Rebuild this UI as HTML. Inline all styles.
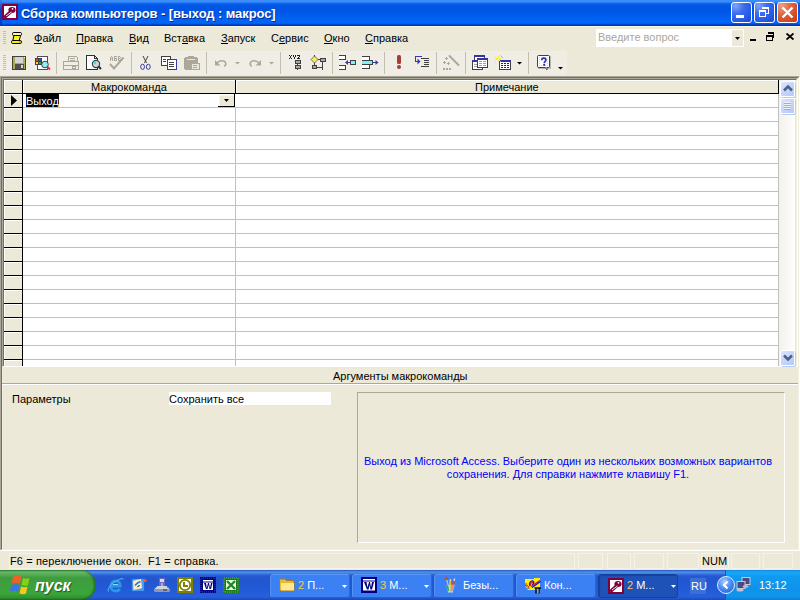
<!DOCTYPE html>
<html><head><meta charset="utf-8">
<style>
*{margin:0;padding:0;box-sizing:border-box}
html,body{width:800px;height:600px;overflow:hidden;background:#ECE9D8;font-family:"Liberation Sans",sans-serif;font-size:11px;color:#000}
.a{position:absolute}
.t{position:absolute;white-space:pre;line-height:13px}
#title{left:0;top:0;width:800px;height:26px;background:linear-gradient(#3F8EF9 0,#3A8CFA 2px,#1670F2 3px,#065CE9 4px,#0056E3 8px,#0057E6 12px,#005DEE 16px,#0064F6 20px,#0066F8 23px,#0052DC 24px,#0037B6 25px,#0037B6 26px)}
.tb{position:absolute;top:2px;width:21px;height:21px;border:1px solid #fff;border-radius:3px;background:radial-gradient(circle at 20% 15%,#7FA6F8 0,#3D6EEE 35%,#2A5DE8 65%,#1D48CF 100%)}
#menubar{left:0;top:26px;width:800px;height:24px;background:#ECE9D8}
.mi{top:32px}
u{text-decoration:none;border-bottom:1px solid #000;display:inline-block;line-height:10px}
#toolbar{left:0;top:51px;width:567px;height:24px;background:#F0EEE4;border-radius:0 2px 2px 0}
.tk{position:absolute;top:574px;width:80px;height:24px;border-radius:3px;background:#3C81F3;border:1px solid;border-color:#5A98F6 #2A66D8 #2A5ECE #5592F4;box-shadow:-1px 0 0 #2354C4}
.tkt{top:579px;color:#fff}
.sep{position:absolute;top:53px;width:1px;height:20px;background:#C5C2B2}
.grip{position:absolute;width:3px}
.sb{position:absolute;width:15px;height:16px;border-radius:2px;border:1px solid #fff;background:linear-gradient(135deg,#DCE6FD 0,#C6D5FB 50%,#B5C9F8 100%);box-shadow:1px 1px 0 #B9CAF3}
</style></head><body>
<!-- title bar -->
<div id="title" class="a"></div>
<div class="a" style="left:0;top:0;width:2px;height:26px;background:linear-gradient(#3A7FE8,#0043C8 10px,#0043C8 22px,#0036B5)"></div>
<svg class="a" style="left:2px;top:4px" width="16" height="16" viewBox="0 0 16 16">
<rect x="0" y="0" width="16" height="16" fill="#800040"/>
<rect x="2" y="2" width="12" height="12" fill="#fff"/>
<path d="M3.5 12.5L9 7.5" stroke="#800040" stroke-width="3.4" stroke-linecap="round"/>
<ellipse cx="10" cy="6" rx="3.6" ry="3" fill="#800040"/>
<path d="M4 12L9.5 8" stroke="#fff" stroke-width="0.9"/>
<circle cx="10.5" cy="4.8" r="0.9" fill="#fff"/>
</svg>
<div class="t" style="left:21px;top:6px;font-size:13px;font-weight:bold;color:#0A2A8A;line-height:16px;letter-spacing:-0.1px;transform:translate(1px,1px)">Сборка компьютеров - [выход : макрос]</div>
<div class="t" style="left:21px;top:6px;font-size:13px;font-weight:bold;color:#fff;line-height:16px;letter-spacing:-0.1px">Сборка компьютеров - [выход : макрос]</div>
<div class="tb" style="left:731px"></div>
<div class="tb" style="left:754px"></div>
<div class="tb" style="left:777px;background:radial-gradient(circle at 20% 15%,#F0A088 0,#E06C48 35%,#D64B22 70%,#C83C10 100%)"></div>
<div class="a" style="left:736px;top:15px;width:8px;height:3px;background:#fff"></div>
<svg class="a" style="left:759px;top:7px" width="11" height="10" shape-rendering="crispEdges"><rect x="3" y="0" width="7" height="2" fill="#fff"/><rect x="9" y="2" width="1" height="5" fill="#fff"/><rect x="7" y="6" width="2" height="1" fill="#fff"/><rect x="0" y="3" width="7" height="2" fill="#fff"/><rect x="0" y="5" width="1" height="5" fill="#fff"/><rect x="6" y="5" width="1" height="5" fill="#fff"/><rect x="0" y="9" width="7" height="1" fill="#fff"/></svg>
<svg class="a" style="left:781px;top:6px" width="13" height="13"><path d="M1.5 1.5L11.5 11.5M11.5 1.5L1.5 11.5" stroke="#fff" stroke-width="2.3"/></svg>

<!-- menu bar -->
<div id="menubar" class="a"></div>
<div class="a" style="left:0;top:26px;width:800px;height:1px;background:#F8F5E6"></div>
<div class="a grip" style="left:3px;top:31px;height:13px;background:repeating-linear-gradient(to bottom,#C3C0B0 0 1px,transparent 1px 2px)"></div>
<svg class="a" style="left:11px;top:32px" width="12" height="12" viewBox="0 0 12 12">
<path d="M3 3.5L9.5 3.5L8 9.5L1.5 9.5Z" fill="#F4F000" stroke="#000" stroke-width="1"/>
<path d="M4 5H8.5M3.5 7H8M3 8.5H7.5" stroke="#fff" stroke-width="0.8" stroke-dasharray="1 1"/>
<rect x="1.5" y="0.5" width="9" height="3" rx="1.2" fill="#fff" stroke="#000" stroke-width="1"/>
<path d="M2.5 2H9.5" stroke="#F4E800" stroke-width="1" stroke-dasharray="1.5 1"/>
<rect x="0.5" y="8.5" width="10" height="3" rx="1.2" fill="#F4F000" stroke="#000" stroke-width="1"/>
<rect x="8" y="9.5" width="2" height="1" fill="#808080"/>
</svg>
<div class="t mi" style="left:34px"><u>Ф</u>айл</div>
<div class="t mi" style="left:76px"><u>П</u>равка</div>
<div class="t mi" style="left:129px"><u>В</u>ид</div>
<div class="t mi" style="left:164px">Вст<u>а</u>вка</div>
<div class="t mi" style="left:221px"><u>З</u>апуск</div>
<div class="t mi" style="left:271px">С<u>е</u>рвис</div>
<div class="t mi" style="left:324px"><u>О</u>кно</div>
<div class="t mi" style="left:365px"><u>С</u>правка</div>

<!-- help box -->
<div class="a" style="left:596px;top:29px;width:148px;height:18px;background:#fff"></div>
<div class="a" style="left:732px;top:30px;width:11px;height:16px;background:#ECE9D8"></div>
<svg class="a" style="left:735px;top:37px" width="5" height="3"><path d="M0 0H5L2.5 3Z" fill="#000"/></svg>
<div class="t" style="left:598px;top:31px;color:#ACA899">Введите вопрос</div>
<div class="a" style="left:750px;top:39px;width:6px;height:2px;background:#000"></div>
<svg class="a" style="left:766px;top:32px" width="8" height="9"><rect x="2" y="0" width="6" height="2" fill="#000"/><rect x="7" y="0" width="1" height="6" fill="#000"/><rect x="0" y="3" width="7" height="2" fill="#000"/><rect x="0" y="3" width="1" height="6" fill="#000"/><rect x="6" y="3" width="1" height="6" fill="#000"/><rect x="0" y="8" width="7" height="1" fill="#000"/></svg>
<svg class="a" style="left:786px;top:33px" width="8" height="7"><path d="M0.5 0.5L7.5 6.5M7.5 0.5L0.5 6.5" stroke="#000" stroke-width="1.8"/></svg>

<!-- toolbar -->
<div id="toolbar" class="a"></div>
<svg class="a" style="left:0;top:0" width="600" height="76" viewBox="0 0 600 76">
<g shape-rendering="crispEdges">
<!-- grip -->
<rect x="3" y="55" width="3" height="1" fill="#C3C0B0"/><rect x="3" y="57" width="3" height="1" fill="#C3C0B0"/><rect x="3" y="59" width="3" height="1" fill="#C3C0B0"/><rect x="3" y="61" width="3" height="1" fill="#C3C0B0"/><rect x="3" y="63" width="3" height="1" fill="#C3C0B0"/><rect x="3" y="65" width="3" height="1" fill="#C3C0B0"/><rect x="3" y="67" width="3" height="1" fill="#C3C0B0"/><rect x="3" y="69" width="3" height="1" fill="#C3C0B0"/>
<!-- separators -->
<rect x="56" y="52" width="1" height="22" fill="#C2BFAE"/>
<rect x="131" y="52" width="1" height="22" fill="#C2BFAE"/>
<rect x="206" y="52" width="1" height="22" fill="#C2BFAE"/>
<rect x="280" y="52" width="1" height="22" fill="#C2BFAE"/>
<rect x="332" y="52" width="1" height="22" fill="#C2BFAE"/>
<rect x="384" y="52" width="1" height="22" fill="#C2BFAE"/>
<rect x="436" y="52" width="1" height="22" fill="#C2BFAE"/>
<rect x="465" y="52" width="1" height="22" fill="#C2BFAE"/>
<rect x="528" y="52" width="1" height="22" fill="#C2BFAE"/>
<!-- save -->
<rect x="12" y="56" width="14" height="14" fill="#404040"/>
<rect x="13" y="57" width="12" height="12" fill="#B2A950"/>
<rect x="15" y="57" width="8" height="6" fill="#D4D4D4"/>
<rect x="15" y="64" width="9" height="5" fill="#505050"/>
<rect x="21" y="65" width="2" height="3" fill="#D8D8D8"/>
<rect x="24" y="57" width="1" height="1" fill="#fff"/>
<!-- report preview -->
<rect x="37" y="56" width="11" height="14" fill="#505050"/>
<rect x="38" y="57" width="9" height="12" fill="#fff"/>
<rect x="35" y="58" width="7" height="7" fill="#404040"/>
<rect x="36" y="59" width="2" height="2" fill="#E04040"/><rect x="39" y="59" width="2" height="2" fill="#3050E0"/>
<rect x="36" y="62" width="2" height="2" fill="#F0E020"/><rect x="39" y="62" width="2" height="2" fill="#30A030"/>
</g>
<circle cx="45" cy="64.5" r="3.3" fill="#8FF0F8" stroke="#404040" stroke-width="1"/>
<path d="M47.5 67L50 69.5" stroke="#E03040" stroke-width="2"/>
<!-- printer disabled -->
<g fill="none" stroke="#ACA899" stroke-width="1" shape-rendering="crispEdges">
<path d="M68.5 61.5V56.5H76.5L77.5 57.5V61.5"/><path d="M70 58.5H75M70 60.5H75"/>
<rect x="63.5" y="61.5" width="15" height="8"/><path d="M64 65.5H78"/><rect x="72.5" y="66.5" width="3" height="2"/>
</g>
<!-- print preview -->
<path d="M86.5 55.5H94.5L97.5 58.5V69.5H86.5Z" fill="#fff" stroke="#303030" stroke-width="1" shape-rendering="crispEdges"/>
<path d="M94.5 55.5V58.5H97.5" fill="none" stroke="#303030" stroke-width="1" shape-rendering="crispEdges"/>
<circle cx="96" cy="64" r="3.6" fill="#C8D8E0" stroke="#404040" stroke-width="1.2"/>
<circle cx="95" cy="63" r="1.2" fill="#30E0F0"/>
<path d="M98.5 66.5L101 69" stroke="#303030" stroke-width="2.2"/>
<!-- spelling disabled -->
<g shape-rendering="crispEdges"><rect x="111" y="56" width="1" height="1" fill="#ACA899"/><rect x="110" y="57" width="1" height="1" fill="#ACA899"/><rect x="112" y="57" width="1" height="1" fill="#ACA899"/><rect x="110" y="58" width="1" height="1" fill="#ACA899"/><rect x="111" y="58" width="1" height="1" fill="#ACA899"/><rect x="112" y="58" width="1" height="1" fill="#ACA899"/><rect x="110" y="59" width="1" height="1" fill="#ACA899"/><rect x="112" y="59" width="1" height="1" fill="#ACA899"/><rect x="110" y="60" width="1" height="1" fill="#ACA899"/><rect x="112" y="60" width="1" height="1" fill="#ACA899"/><rect x="114" y="56" width="1" height="1" fill="#ACA899"/><rect x="115" y="56" width="1" height="1" fill="#ACA899"/><rect x="116" y="56" width="1" height="1" fill="#ACA899"/><rect x="114" y="57" width="1" height="1" fill="#ACA899"/><rect x="114" y="58" width="1" height="1" fill="#ACA899"/><rect x="115" y="58" width="1" height="1" fill="#ACA899"/><rect x="116" y="58" width="1" height="1" fill="#ACA899"/><rect x="114" y="59" width="1" height="1" fill="#ACA899"/><rect x="116" y="59" width="1" height="1" fill="#ACA899"/><rect x="114" y="60" width="1" height="1" fill="#ACA899"/><rect x="115" y="60" width="1" height="1" fill="#ACA899"/><rect x="116" y="60" width="1" height="1" fill="#ACA899"/><rect x="118" y="56" width="1" height="1" fill="#ACA899"/><rect x="119" y="56" width="1" height="1" fill="#ACA899"/><rect x="118" y="57" width="1" height="1" fill="#ACA899"/><rect x="120" y="57" width="1" height="1" fill="#ACA899"/><rect x="118" y="58" width="1" height="1" fill="#ACA899"/><rect x="119" y="58" width="1" height="1" fill="#ACA899"/><rect x="118" y="59" width="1" height="1" fill="#ACA899"/><rect x="120" y="59" width="1" height="1" fill="#ACA899"/><rect x="118" y="60" width="1" height="1" fill="#ACA899"/><rect x="119" y="60" width="1" height="1" fill="#ACA899"/></g>
<path d="M110 64L114 68.5L123.5 57.5" stroke="#ACA899" stroke-width="2" fill="none"/>
<!-- cut -->
<path d="M143 56L146.5 63M148 56L144.5 63" stroke="#404040" stroke-width="1"/>
<ellipse cx="142.6" cy="66.8" rx="1.9" ry="2.6" fill="none" stroke="#3838B0" stroke-width="1"/>
<ellipse cx="148.3" cy="66.8" rx="1.9" ry="2.6" fill="none" stroke="#3838B0" stroke-width="1"/>
<!-- copy -->
<g shape-rendering="crispEdges">
<rect x="161" y="56" width="10" height="10" fill="#404040"/><rect x="162" y="57" width="8" height="8" fill="#fff"/>
<rect x="163" y="59" width="3" height="1" fill="#404040"/><rect x="163" y="61" width="3" height="1" fill="#404040"/>
<rect x="167" y="59" width="10" height="11" fill="#3838A8"/><rect x="168" y="60" width="8" height="9" fill="#fff"/>
<rect x="169" y="62" width="5" height="1" fill="#404040"/><rect x="169" y="64" width="5" height="1" fill="#404040"/><rect x="169" y="66" width="5" height="1" fill="#404040"/>
<!-- paste disabled -->
<rect x="185" y="57" width="12" height="13" fill="#ACA899"/><rect x="184" y="58" width="14" height="11" fill="#ACA899"/>
<rect x="188" y="56" width="6" height="2" fill="#ACA899"/><rect x="187" y="59" width="8" height="1" fill="#E8E6DA"/>
<rect x="191" y="63" width="9" height="7" fill="#ACA899"/><rect x="192" y="64" width="7" height="5" fill="#E8E6DA"/>
<rect x="193" y="65" width="4" height="1" fill="#ACA899"/><rect x="193" y="67" width="4" height="1" fill="#ACA899"/>
</g>
<!-- undo / redo disabled -->
<path d="M216.5 63.5C219 60 224 60 225.5 62.5C226.5 64.5 225 66 224 66" stroke="#ACA899" stroke-width="1.6" fill="none"/>
<path d="M215 60V65.5H220.5Z" fill="#ACA899"/>
<path d="M235 62H240L237.5 64.5Z" fill="#ACA899"/>
<path d="M259.5 63.5C257 60 252 60 250.5 62.5C249.5 64.5 251 66 252 66" stroke="#ACA899" stroke-width="1.6" fill="none"/>
<path d="M261 60V65.5H255.5Z" fill="#ACA899"/>
<path d="M269 62H274L271.5 64.5Z" fill="#ACA899"/>
<!-- macro names -->
<g shape-rendering="crispEdges" fill="#202020"><rect x="289" y="55" width="1" height="1"/><rect x="291" y="55" width="1" height="1"/><rect x="290" y="56" width="1" height="1"/><rect x="290" y="57" width="1" height="1"/><rect x="289" y="58" width="1" height="1"/><rect x="291" y="58" width="1" height="1"/><rect x="293" y="55" width="1" height="1"/><rect x="295" y="55" width="1" height="1"/><rect x="293" y="56" width="1" height="1"/><rect x="295" y="56" width="1" height="1"/><rect x="294" y="57" width="1" height="1"/><rect x="294" y="58" width="1" height="1"/><rect x="297" y="55" width="1" height="1"/><rect x="298" y="55" width="1" height="1"/><rect x="299" y="55" width="1" height="1"/><rect x="299" y="56" width="1" height="1"/><rect x="298" y="57" width="1" height="1"/><rect x="297" y="58" width="1" height="1"/><rect x="298" y="58" width="1" height="1"/><rect x="299" y="58" width="1" height="1"/></g>
<g shape-rendering="crispEdges">
<rect x="295" y="60" width="6" height="4" fill="#404040"/><rect x="296" y="61" width="4" height="2" fill="#A8A8A8"/>
<rect x="297" y="64" width="1" height="1" fill="#404040"/>
<rect x="295" y="65" width="6" height="4" fill="#404040"/><rect x="296" y="66" width="4" height="2" fill="#A8A8A8"/>
<rect x="297" y="69" width="1" height="1" fill="#404040"/>
<!-- conditions -->
<rect x="314" y="55" width="1" height="10" fill="#404040"/>
<rect x="316" y="59" width="4" height="1" fill="#404040"/>
<rect x="320" y="58" width="6" height="4" fill="#404040"/><rect x="321" y="59" width="4" height="2" fill="#A8A8A8"/>
<rect x="322" y="62" width="1" height="8" fill="#404040"/>
<rect x="312" y="65" width="5" height="4" fill="#404040"/><rect x="313" y="66" width="3" height="2" fill="#A8A8A8"/>
<rect x="317" y="67" width="5" height="1" fill="#404040"/>
</g>
<path d="M314.5 56L318 59.5L314.5 63L311 59.5Z" fill="#FFF040" stroke="#505070" stroke-width="0.8"/>
<!-- insert rows -->
<g shape-rendering="crispEdges">
<rect x="339" y="55" width="7" height="5" fill="#404040"/><rect x="339" y="56" width="6" height="3" fill="#fff"/>
<rect x="339" y="65" width="7" height="5" fill="#404040"/><rect x="339" y="66" width="6" height="3" fill="#fff"/>
<rect x="350" y="60" width="6" height="5" fill="#404040"/><rect x="351" y="61" width="4" height="3" fill="#7FF0F8"/>
<rect x="347" y="62" width="3" height="1" fill="#3838A8"/>
</g>
<path d="M345 62.5L348 60V65Z" fill="#3838A8"/>
<!-- delete rows -->
<g shape-rendering="crispEdges">
<rect x="362" y="56" width="8" height="13" fill="#404040"/><rect x="362" y="57" width="7" height="11" fill="#fff"/>
<rect x="362" y="60" width="11" height="5" fill="#404040"/><rect x="362" y="61" width="10" height="3" fill="#7FF0F8"/>
<rect x="373" y="62" width="3" height="1" fill="#3838A8"/>
</g>
<path d="M378.5 62.5L375.5 60V65Z" fill="#3838A8"/>
<!-- run -->
<rect x="397" y="55" width="4" height="9" rx="1.5" fill="#A63C3C"/>
<circle cx="399" cy="67" r="2" fill="#A63C3C"/>
<!-- single step -->
<path d="M422 56.5H415V61.5H419" stroke="#3838B8" stroke-width="1" fill="none" shape-rendering="crispEdges"/>
<path d="M421 59L418 59V64Z" fill="none"/>
<path d="M420.5 61.5L417.5 58.5V64.5Z" fill="#3838B8"/>
<g fill="#404040" shape-rendering="crispEdges">
<rect x="421" y="58" width="8" height="1"/><rect x="424" y="60" width="5" height="1"/><rect x="424" y="62" width="5" height="1"/><rect x="424" y="64" width="5" height="1"/><rect x="421" y="66" width="8" height="1"/>
</g>
<!-- builder disabled -->
<path d="M449.5 56L458.5 65" stroke="#ACA899" stroke-width="2" stroke-linecap="round"/>
<g fill="#ACA899" shape-rendering="crispEdges">
<rect x="446" y="57" width="1" height="3"/><rect x="445" y="58" width="3" height="1"/>
<rect x="444" y="61" width="1" height="3"/><rect x="443" y="62" width="3" height="1"/>
<rect x="448" y="62" width="1" height="3"/><rect x="447" y="63" width="3" height="1"/>
<rect x="443" y="68" width="2" height="2"/><rect x="446" y="68" width="2" height="2"/><rect x="449" y="68" width="2" height="2"/>
</g>
<!-- database window -->
<g shape-rendering="crispEdges">
<rect x="474" y="55" width="11" height="8" fill="#404040"/><rect x="475" y="57" width="9" height="5" fill="#fff"/><rect x="474" y="55" width="11" height="2" fill="#3434A4"/>
<rect x="472" y="60" width="11" height="10" fill="#404040"/><rect x="473" y="62" width="9" height="7" fill="#fff"/><rect x="472" y="60" width="11" height="2" fill="#3434A4"/>
<rect x="474" y="64" width="3" height="1" fill="#A0A0A0"/><rect x="474" y="66" width="3" height="1" fill="#A0A0A0"/>
<rect x="477" y="58" width="11" height="10" fill="#404040"/><rect x="478" y="60" width="9" height="7" fill="#fff"/><rect x="477" y="58" width="11" height="2" fill="#3434A4"/>
<rect x="479" y="61" width="3" height="1" fill="#A0A0A0"/><rect x="483" y="61" width="3" height="1" fill="#A0A0A0"/>
<rect x="479" y="63" width="3" height="1" fill="#A0A0A0"/><rect x="483" y="63" width="3" height="1" fill="#A0A0A0"/>
<rect x="479" y="65" width="3" height="1" fill="#A0A0A0"/><rect x="483" y="65" width="3" height="1" fill="#A0A0A0"/>
<!-- new object -->
<rect x="499" y="60" width="12" height="10" fill="#404040"/><rect x="500" y="62" width="10" height="7" fill="#fff"/><rect x="499" y="60" width="12" height="2" fill="#3434A4"/>
<rect x="501" y="63" width="2" height="1" fill="#303030"/><rect x="504" y="63" width="2" height="1" fill="#303030"/><rect x="507" y="63" width="2" height="1" fill="#303030"/>
<rect x="501" y="65" width="2" height="1" fill="#303030"/><rect x="504" y="65" width="2" height="1" fill="#303030"/><rect x="507" y="65" width="2" height="1" fill="#303030"/>
<rect x="501" y="67" width="2" height="1" fill="#303030"/><rect x="504" y="67" width="2" height="1" fill="#303030"/><rect x="507" y="67" width="2" height="1" fill="#303030"/>
<rect x="498" y="56" width="1" height="6" fill="#F4EC30"/><rect x="496" y="58" width="5" height="2" fill="#F4EC30"/><rect x="497" y="57" width="3" height="4" fill="#F8F070"/>
<rect x="495" y="57" width="1" height="1" fill="#F0E840"/><rect x="501" y="56" width="1" height="1" fill="#B0B0B0"/><rect x="502" y="57" width="1" height="1" fill="#B0B0B0"/><rect x="500" y="55" width="1" height="1" fill="#C8C8C8"/>
<rect x="495" y="62" width="1" height="1" fill="#F0E840"/><rect x="494" y="59" width="1" height="1" fill="#F0E840"/><rect x="500" y="61" width="1" height="1" fill="#B0B0B0"/>
</g>
<path d="M517 62H522L519.5 64.5Z" fill="#000"/>
<!-- help -->
<rect x="538" y="56" width="13" height="13" fill="#808080" opacity="0.5"/>
<rect x="537.5" y="55.5" width="12" height="12" fill="#fff" stroke="#404040" stroke-width="1" rx="1"/>
<path d="M545 67.5L547 70V67.5" fill="#fff" stroke="#404040" stroke-width="0.8"/>
<g fill="#F0E840"><rect x="539" y="57" width="1" height="1"/><rect x="541" y="57" width="1" height="1"/><rect x="543" y="57" width="1" height="1"/><rect x="545" y="57" width="1" height="1"/><rect x="547" y="57" width="1" height="1"/><rect x="539" y="59" width="1" height="1"/><rect x="547" y="59" width="1" height="1"/><rect x="539" y="61" width="1" height="1"/><rect x="547" y="61" width="1" height="1"/><rect x="539" y="63" width="1" height="1"/><rect x="547" y="63" width="1" height="1"/><rect x="539" y="65" width="1" height="1"/><rect x="541" y="65" width="1" height="1"/><rect x="545" y="65" width="1" height="1"/><rect x="547" y="65" width="1" height="1"/></g>
<path d="M541.8 60.3C541.8 58.8 542.7 58.2 543.8 58.2C545 58.2 545.9 58.9 545.9 60C545.9 61.3 544.2 61.7 544.2 63.2" stroke="#3030A8" stroke-width="1.7" fill="none"/><rect x="543.2" y="64" width="2" height="1.8" fill="#3030A8"/>
<path d="M558 67H563L560.5 69.5Z" fill="#000"/>
</svg>

<!-- MDI window -->
<div class="a" style="left:0;top:76px;width:800px;height:475px;border:1px solid;border-color:#ACA899 #fff #fff #ACA899"></div>
<div class="a" style="left:1px;top:77px;width:798px;height:473px;border:1px solid;border-color:#716F64 #F1EFE2 #F1EFE2 #716F64"></div>
<div class="a" style="left:2px;top:78px;width:796px;height:289px;border:1px solid;border-color:#ACA899 #fff #fff #ACA899"></div>
<div class="a" style="left:3px;top:79px;width:794px;height:287px;border:1px solid;border-color:#716F64 #F1EFE2 #F1EFE2 #716F64;border-bottom:0"></div>
<!-- data area -->
<div class="a" style="left:4px;top:80px;width:791px;height:286px;background:#fff"></div>
<div class="a" style="left:23px;top:94px;width:756px;height:272px;background:repeating-linear-gradient(to bottom,#fff 0 13px,#C0C0C0 13px 14px)"></div>
<div class="a" style="left:235px;top:94px;width:1px;height:272px;background:#C0C0C0"></div>
<div class="a" style="left:778px;top:94px;width:1px;height:272px;background:#C0C0C0"></div>
<!-- row selectors -->
<div class="a" style="left:4px;top:94px;width:18px;height:272px;background:repeating-linear-gradient(to bottom,#fff 0 1px,#ECE9D8 1px 13px,#000 13px 14px)"></div>
<div class="a" style="left:4px;top:94px;width:1px;height:272px;background:repeating-linear-gradient(to bottom,#fff 0 13px,#000 13px 14px)"></div>
<!-- header -->
<div class="a" style="left:4px;top:80px;width:774px;height:13px;background:#ECE9D8;border-top:1px solid #fff;border-left:1px solid #fff"></div>
<div class="a" style="left:23px;top:81px;width:1px;height:12px;background:#fff"></div>
<div class="a" style="left:236px;top:81px;width:1px;height:12px;background:#fff"></div>
<div class="a" style="left:4px;top:93px;width:775px;height:1px;background:#000"></div>
<div class="a" style="left:235px;top:80px;width:1px;height:13px;background:#000"></div>
<div class="a" style="left:778px;top:80px;width:1px;height:14px;background:#000"></div>
<div class="a" style="left:22px;top:80px;width:1px;height:286px;background:#000"></div>
<div class="t" style="left:91px;top:81px">Макрокоманда</div>
<div class="t" style="left:475px;top:81px">Примечание</div>
<!-- current row -->
<svg class="a" style="left:11px;top:95px" width="6" height="11"><path d="M0 0L6 5.5L0 11Z" fill="#000"/></svg>
<div class="a" style="left:26px;top:94px;width:33px;height:13px;background:#000"></div>
<div class="t" style="left:26px;top:95px;color:#fff">Выход</div>
<div class="a" style="left:235px;top:94px;width:1px;height:13px;background:#fff"></div>
<div class="a" style="left:219px;top:95px;width:15px;height:11px;background:#ECE9D8;border-top:1px solid #F5F4EE;border-left:1px solid #F5F4EE"></div>
<div class="a" style="left:234px;top:94px;width:1px;height:13px;background:#000"></div>
<div class="a" style="left:218px;top:106px;width:17px;height:1px;background:#000"></div>
<svg class="a" style="left:224px;top:99px" width="5" height="3"><path d="M0 0H5L2.5 3Z" fill="#000"/></svg>
<!-- scrollbar -->
<div class="a" style="left:779px;top:80px;width:16px;height:286px;background:linear-gradient(to right,#F3F1EC,#FEFEFB)"></div>
<div class="sb" style="left:780px;top:81px;"></div>
<div class="sb" style="left:780px;top:98px;"></div>
<div class="sb" style="left:780px;top:350px;"></div>
<svg class="a" style="left:783px;top:84px" width="10" height="8"><path d="M1 6.5L5 2.5L9 6.5" stroke="#4D6185" stroke-width="2.6" fill="none"/></svg>
<svg class="a" style="left:783px;top:354px" width="10" height="8"><path d="M1 1.5L5 5.5L9 1.5" stroke="#4D6185" stroke-width="2.6" fill="none"/></svg>
<div class="a" style="left:784px;top:102px;width:7px;height:8px;background:repeating-linear-gradient(to bottom,#EEF4FE 0 1px,#8CB0F8 1px 2px)"></div>

<!-- lower panel -->
<div class="a" style="left:2px;top:367px;width:796px;height:182px;background:#ECE9D8;border-left:1px solid #F1EFE2"></div>
<div class="t" style="left:333px;top:370px">Аргументы макрокоманды</div>
<div class="a" style="left:2px;top:383px;width:796px;height:1px;background:#ACA899"></div>
<div class="a" style="left:2px;top:384px;width:796px;height:1px;background:#fff"></div>
<div class="t" style="left:12px;top:393px">Параметры</div>
<div class="a" style="left:169px;top:392px;width:162px;height:13px;background:#fff"></div>
<div class="t" style="left:169px;top:393px">Сохранить все</div>
<div class="a" style="left:357px;top:392px;width:428px;height:151px;border:1px solid;border-color:#ACA899 #fff #fff #ACA899"></div>
<div class="t" style="left:354px;top:455px;width:428px;text-align:center;color:#00f">Выход из Microsoft Access. Выберите один из нескольких возможных вариантов
сохранения. Для справки нажмите клавишу F1.</div>

<!-- status bar -->
<div class="a" style="left:0;top:550px;width:800px;height:20px;background:#ECE9D8;border-top:1px solid #fff"></div>
<div class="a" style="left:9px;top:553px;width:566px;height:16px;border:1px solid #F4F2E9"></div><div class="a" style="left:578px;top:553px;width:25px;height:16px;border:1px solid #F4F2E9"></div><div class="a" style="left:607px;top:553px;width:24px;height:16px;border:1px solid #F4F2E9"></div><div class="a" style="left:634px;top:553px;width:30px;height:16px;border:1px solid #F4F2E9"></div><div class="a" style="left:667px;top:553px;width:32px;height:16px;border:1px solid #F4F2E9"></div><div class="a" style="left:701px;top:553px;width:28px;height:16px;border:1px solid #F4F2E9"></div><div class="a" style="left:731px;top:553px;width:29px;height:16px;border:1px solid #F4F2E9"></div><div class="a" style="left:763px;top:553px;width:30px;height:16px;border:1px solid #F4F2E9"></div>
<div class="t" style="left:10px;top:555px;letter-spacing:0.13px">F6 = переключение окон.  F1 = справка.</div>
<div class="t" style="left:702px;top:555px">NUM</div>

<!-- taskbar -->
<div class="a" style="left:0;top:570px;width:800px;height:30px;background:linear-gradient(#2451B8 0,#3A73DF 1px,#4A8CE9 2px,#4A8CE9 3px,#3470DC 4px,#2459D2 6px,#2156CF 10px,#235AD6 20px,#2660DC 26px,#2358D0 28px,#1D48B0 30px)"></div>
<!-- start -->
<div class="a" style="left:0;top:570px;width:96px;height:30px;border-radius:0 14px 14px 0/0 15px 15px 0;background:linear-gradient(#2E872E 0,#6BB66B 2px,#5AAE5A 4px,#3E9B3E 8px,#3DA13D 16px,#3AA53A 24px,#2F8F2F 28px,#256F25 30px);box-shadow:inset -2px 0 2px rgba(0,60,0,0.45)"></div>
<svg class="a" style="left:9px;top:575px" width="22" height="20" viewBox="0 0 22 20">
<path d="M4 2C6 0.5 9 0.5 12.5 1.5L11 8.5C8 7.5 5 7.5 2.5 9Z" fill="#F0602A"/>
<path d="M14 3C16.5 4 18.5 4 20.5 3L19 10C17 11 15 11 12.5 10Z" fill="#88D018"/>
<path d="M2 10.5C4.5 9 7.5 9 10.5 10L9 16.5C6.5 15.5 3.5 15.5 1 17Z" fill="#4070F0"/>
<path d="M12 11.5C14.5 12.5 16.5 12.5 18.5 11.5L17 18.5C15 19.5 13 19.5 10.5 18.5Z" fill="#F8C818"/>
</svg>
<div class="t" style="left:35px;top:577px;font-size:16px;line-height:18px;font-weight:bold;font-style:italic;color:#fff;text-shadow:1px 1px 1px #1E5A1E">пуск</div>
<!-- quick launch -->
<svg class="a" style="left:107px;top:577px" width="17" height="16" viewBox="0 0 17 16">
<path d="M4.2 9H13.2C13.4 5.8 11.4 4 8.7 4C5.9 4 3.8 6.1 3.8 9.2C3.8 12.2 6 14 8.8 14C10.8 14 12.2 13.2 13 12" fill="none" stroke="#2A98E8" stroke-width="2.8"/>
<path d="M6 7.5H11" stroke="#BFE4FF" stroke-width="0.8"/>
<path d="M1.5 14.5C-0.5 12.5 5 6 10 3.5C14 1.5 16.5 1 16 2.5" fill="none" stroke="#5FB8F5" stroke-width="1"/>
</svg>
<svg class="a" style="left:131px;top:577px" width="16" height="15" viewBox="0 0 16 15">
<rect x="0" y="1" width="14" height="14" rx="1.5" fill="#1E64D8"/>
<rect x="1" y="2" width="12" height="12" rx="1" fill="#4A9AF0"/>
<path d="M2 4C5 2.5 8 3 10 2L11 11C8 12.5 5 12 2.5 13Z" fill="#F8F0C8"/>
<path d="M4 8.5C6 6 8 5 9.5 4.5" stroke="#3A70D0" stroke-width="1.5" fill="none"/>
<path d="M5.5 10.5L8 8L9 9Z" fill="#101010"/>
<circle cx="14" cy="3.5" r="1.6" fill="#F06020"/>
</svg>
<svg class="a" style="left:154px;top:577px" width="16" height="16" viewBox="0 0 16 16">
<rect x="5" y="1" width="6" height="10" fill="#6A6AC0"/>
<rect x="6" y="2" width="4" height="3" fill="#D8D8F0"/>
<rect x="7" y="6" width="2" height="4" fill="#A8A8E0"/>
<path d="M0.5 12L3.5 9H12.5L15.5 12V14.5H0.5Z" fill="#D0D4E0"/>
<rect x="0.5" y="12" width="15" height="2.5" fill="#9098B0"/>
<rect x="9" y="12.5" width="4" height="1" fill="#303040"/>
<rect x="13" y="10" width="1.5" height="1" fill="#40C040"/>
</svg>
<svg class="a" style="left:177px;top:577px" width="16" height="16" viewBox="0 0 16 16" shape-rendering="crispEdges">
<rect x="0" y="0" width="16" height="16" fill="#808000"/>
<rect x="2" y="2" width="12" height="12" fill="#fff"/>
<circle cx="8" cy="8" r="5.2" fill="#fff" stroke="#808000" stroke-width="1.8" shape-rendering="auto"/>
<rect x="6" y="5" width="2" height="5" fill="#808000"/>
<rect x="6" y="8" width="5" height="2" fill="#808000"/>
</svg>
<svg class="a" style="left:200px;top:577px" width="16" height="16" viewBox="0 0 16 16">
<rect x="0" y="0" width="16" height="16" fill="#000080"/>
<rect x="1" y="1" width="14" height="14" fill="none" stroke="#3040C0" stroke-width="1" stroke-dasharray="1 1"/>
<rect x="3" y="3" width="10" height="1.5" fill="#fff"/>
<path d="M3 5.5H13V13H3Z" fill="#fff"/>
<path d="M4 6H6L6.8 11L8 6H9L10 11L11 6H12.5L11 12H9.5L8.5 8L7.5 12H6Z" fill="#000080"/>
</svg>
<svg class="a" style="left:223px;top:577px" width="16" height="16" viewBox="0 0 16 16">
<rect x="0" y="0" width="16" height="16" fill="#1F7A1F"/>
<rect x="1" y="1" width="14" height="14" fill="none" stroke="#60B060" stroke-width="1" stroke-dasharray="1 1"/>
<rect x="3" y="3" width="10" height="10" fill="#E8F4E8"/>
<path d="M4 4L12 12M12 4L4 12" stroke="#1F8A1F" stroke-width="2.4"/>
</svg>
<!-- task buttons -->
<div class="tk" style="left:270px"></div>
<div class="tk" style="left:352px"></div>
<div class="tk" style="left:434px"></div>
<div class="tk" style="left:516px"></div>
<div class="tk" style="left:598px;background:#1E52B7;box-shadow:inset 1px 1px 1px #17429A;border-color:#17419A"></div>
<!-- btn1 -->
<svg class="a" style="left:279px;top:578px" width="16" height="14" viewBox="0 0 16 14">
<path d="M0.5 2.5C0.5 1.5 1 1 2 1H6L7.5 2.5H13.5C14.5 2.5 15 3 15 4V12.5H0.5Z" fill="#E8B838" stroke="#B07810" stroke-width="1"/>
<path d="M2 5H15V12.5H2Z" fill="#FFE890"/>
</svg>
<div class="t tkt" style="left:298px"><span style="color:#F8C850">2</span> П...</div>
<svg class="a" style="left:342px;top:585px" width="5" height="3"><path d="M0 0H5L2.5 3Z" fill="#fff"/></svg>
<!-- btn2 -->
<svg class="a" style="left:361px;top:577px" width="16" height="16" viewBox="0 0 16 16">
<rect x="0" y="0" width="16" height="16" fill="#000080"/>
<rect x="2" y="2" width="12" height="1.5" fill="#fff"/>
<path d="M2 4.5H14V13.5H2Z" fill="#fff"/>
<path d="M3 5H5.5L6.5 10.5L8 5H9L10 10.5L11 5H13L11 12.5H9.5L8.5 8L7.5 12.5H6Z" fill="#000080"/>
</svg>
<div class="t tkt" style="left:380px"><span style="color:#F8C850">3</span> М...</div>
<svg class="a" style="left:424px;top:585px" width="5" height="3"><path d="M0 0H5L2.5 3Z" fill="#fff"/></svg>
<!-- btn3 -->
<svg class="a" style="left:440px;top:574px" width="20" height="22" viewBox="0 0 20 22">
<path d="M6.8 6L8.5 13" stroke="#A8C8F0" stroke-width="1.2"/>
<path d="M10.3 5.5L9.6 17" stroke="#F0C000" stroke-width="1.7"/>
<path d="M10.4 5.5V7" stroke="#FFE8A0" stroke-width="1"/>
<path d="M14.3 5.5L11.3 17" stroke="#F04010" stroke-width="2"/>
<path d="M14.5 4.5L14.2 7" stroke="#D8E0F8" stroke-width="1.4"/>
<circle cx="6.4" cy="4.4" r="1.7" fill="#D05010"/>
<path d="M6 11L15 10.5L13 18H8Z" fill="#E0F0E0" opacity="0.45"/>
<path d="M6.3 11.5L8 11L9 16.5L8.3 17.5Z" fill="#30B030"/>
<path d="M8 18H13" stroke="#F0F8F0" stroke-width="1" opacity="0.8"/>
</svg>
<div class="t tkt" style="left:463px">Безы...</div>
<!-- btn4 -->
<svg class="a" style="left:522px;top:574px" width="22" height="22" viewBox="0 0 22 22">
<path d="M3 5H12V4H18V13L15 16H6L3 12Z" fill="#FFF000"/>
<path d="M3.5 9.5L7.5 14.5" stroke="#E81010" stroke-width="1.6" stroke-dasharray="1.2 0.8"/>
<path d="M3 11L6.5 15" stroke="#1010E0" stroke-width="1" stroke-dasharray="1 1"/>
<path d="M8 12C6.5 9 9 6.5 11 7C12.5 7.5 12 9.5 10 11" fill="none" stroke="#1010E0" stroke-width="1.3"/>
<path d="M8.5 11.5C8 9.5 9.5 8 11 8.5" fill="none" stroke="#E81010" stroke-width="1.2"/>
<path d="M9 12.5L18 6.5" stroke="#E81010" stroke-width="1.4"/>
<path d="M10 13.5L18.5 7.5" stroke="#1010E0" stroke-width="1.4"/>
<path d="M12.5 14H19M14 14V19.5M17 14V19.5" stroke="#101010" stroke-width="1.5"/>
<path d="M16 15V19" stroke="#D0D0E0" stroke-width="0.8"/>
</svg>
<div class="t tkt" style="left:544px">Кон...</div>
<!-- btn5 active -->
<svg class="a" style="left:608px;top:578px" width="16" height="16" viewBox="0 0 16 16">
<rect x="0" y="0" width="16" height="16" fill="#800040"/>
<rect x="2" y="2" width="12" height="12" fill="#fff"/>
<path d="M3.5 12.5L9 7.5" stroke="#800040" stroke-width="3.4" stroke-linecap="round"/>
<ellipse cx="10" cy="6" rx="3.6" ry="3" fill="#800040"/>
<path d="M4 12L9.5 8" stroke="#fff" stroke-width="0.9"/>
<circle cx="10.5" cy="4.8" r="0.9" fill="#fff"/>
</svg>
<div class="t tkt" style="left:627px"><span style="color:#F8C850">2</span> М...</div>
<svg class="a" style="left:671px;top:585px" width="5" height="3"><path d="M0 0H5L2.5 3Z" fill="#fff"/></svg>
<!-- language -->
<div class="a" style="left:690px;top:578px;width:16px;height:16px;background:#3B6ED6"></div>
<div class="t" style="left:691px;top:580px;color:#fff">RU</div>
<!-- tray -->
<div class="a" style="left:725px;top:570px;width:75px;height:30px;background:linear-gradient(#1A84E0 0,#1598EE 1px,#18A8F8 3px,#109BF0 6px,#0E93EA 20px,#0F96EC 26px,#0C7FD6 30px);border-left:1px solid #0F5CC0"></div>
<div class="a" style="left:717px;top:576px;width:18px;height:18px;border-radius:50%;background:radial-gradient(circle at 40% 30%,#A8D0FF 0,#4A8CF0 45%,#2058D0 100%);border:1px solid #E0ECFF"></div>
<svg class="a" style="left:721px;top:580px" width="10" height="10"><path d="M6.5 1.5L3 5L6.5 8.5" stroke="#fff" stroke-width="2.2" fill="none"/></svg>
<svg class="a" style="left:736px;top:577px" width="15" height="15" viewBox="0 0 15 15">
<rect x="6" y="0.5" width="8" height="7" fill="#4A4A80" stroke="#C8C8E0" stroke-width="1"/>
<rect x="1" y="4.5" width="8" height="7" fill="#4A4A80" stroke="#C8C8E0" stroke-width="1"/>
<ellipse cx="4" cy="13" rx="3.5" ry="1.5" fill="#C0C0D8"/>
<ellipse cx="9.5" cy="9.5" rx="3" ry="1.2" fill="#C0C0D8"/>
</svg>
<div class="t" style="left:759px;top:579px;color:#fff">13:12</div>
</body></html>
